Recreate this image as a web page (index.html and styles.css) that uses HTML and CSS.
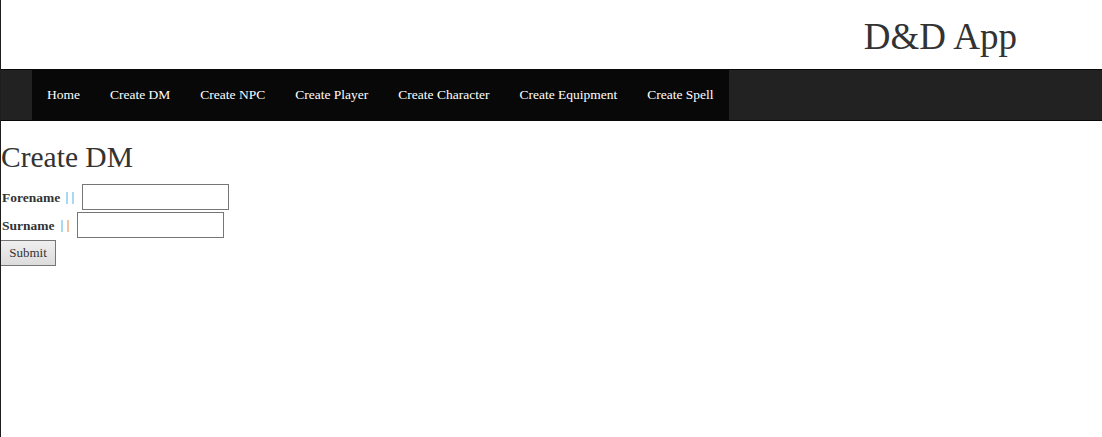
FILE: index.html
```html
<!DOCTYPE html>
<html lang="en">
<head>
<meta charset="utf-8">
<title>D&amp;D App</title>
<link rel="stylesheet" href="styles.css">
</head>
<body>
  <header class="site-header">
    <h1 class="brand">D&amp;D App</h1>
  </header>
  <nav class="navbar">
    <ul class="nav-list">
      <li><a href="#">Home</a></li>
      <li><a href="#">Create DM</a></li>
      <li><a href="#">Create NPC</a></li>
      <li><a href="#">Create Player</a></li>
      <li><a href="#">Create Character</a></li>
      <li><a href="#">Create Equipment</a></li>
      <li><a href="#">Create Spell</a></li>
    </ul>
  </nav>
  <main class="content">
    <h2 class="page-title">Create DM</h2>
    <form class="dm-form">
      <div class="row">
        <label class="lbl" for="forename">Forename</label>
        <span class="sep"><span class="pipe"></span><span class="pipe"></span></span>
        <input class="field" id="forename" type="text">
      </div>
      <div class="row">
        <label class="lbl" for="surname">Surname</label>
        <span class="sep"><span class="pipe alt"></span><span class="pipe"></span></span>
        <input class="field" id="surname" type="text">
      </div>
      <button class="submit" type="submit">Submit</button>
    </form>
  </main>
</body>
</html>
```
FILE: styles.css
```css
* { box-sizing: border-box; }

html, body { height: 100%; }

body {
  margin: 0;
  border-left: 1px solid #1e1e1e;
  font-family: "Liberation Serif", "Times New Roman", serif;
  font-size: 14px;
  color: #333;
  background: #fff;
}

.site-header {
  height: 69px;
  display: flex;
  justify-content: flex-end;
  padding-right: 85px;
}

.brand {
  margin: 17px 0 0;
  font-size: 37px;
  font-weight: 400;
  line-height: 1.1;
  color: #333;
}

.navbar {
  height: 52px;
  background: #222;
  border-top: 1px solid #080808;
  border-bottom: 1px solid #080808;
  padding-left: 31px;
  display: flex;
}

.nav-list {
  list-style: none;
  margin: 0;
  padding: 0;
  display: flex;
  background: #080808;
}

.nav-list a {
  display: block;
  padding: 15px;
  line-height: 20px;
  font-size: 13.5px;
  color: #fff;
  text-decoration: none;
}

.content {
  padding-left: 0;
}

.page-title {
  margin: 20px 0 11px;
  font-size: 29.5px;
  font-weight: 400;
  line-height: 1.1;
  color: #333;
}

.row {
  display: flex;
  align-items: center;
  height: 26px;
  margin-bottom: 2px;
}

.lbl {
  font-weight: 700;
  font-size: 13.5px;
  line-height: 15px;
  padding-left: 1px;
  color: #333;
}

.sep {
  display: flex;
  gap: 4px;
  margin: 0 8px 0 6px;
}

.pipe {
  width: 2px;
  height: 12px;
  margin-top: 2px;
  background: linear-gradient(90deg, #a9d8f3 50%, #f3c39f 50%);
}

.pipe.alt {
  background: linear-gradient(90deg, #f3c39f 50%, #a9d8f3 50%);
}

.field {
  width: 147px;
  height: 26px;
  margin: 0;
  padding: 1px 2px;
  border: 1px solid #767676;
  border-radius: 0;
  font: 13px "Liberation Serif", serif;
}

.submit {
  display: block;
  width: 56px;
  height: 26px;
  margin: 0 0 0 -1px;
  padding: 0;
  border: 1px solid #767676;
  border-radius: 0;
  background: linear-gradient(#efefef, #dcdcdc);
  font: 13px "Liberation Serif", serif;
  color: #333;
}
```
